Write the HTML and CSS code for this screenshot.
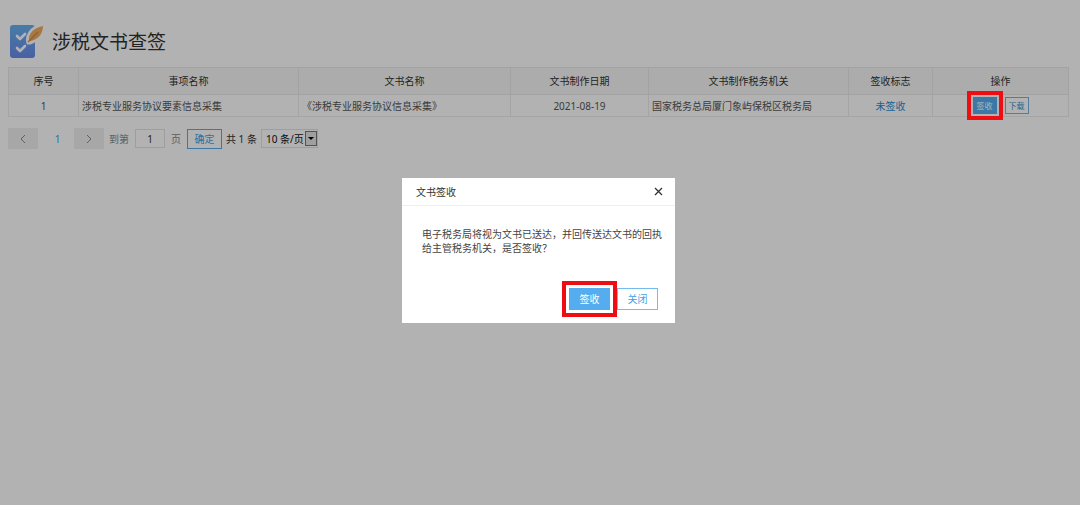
FILE: index.html
```
<!DOCTYPE html>
<html lang="zh-CN">
<head>
    <meta charset="UTF-8">
    <meta name="viewport" content="width=device-width, initial-scale=1.0">
    <title>涉税文书查签</title>
    <link rel="stylesheet" href="styles.css">
</head>
<body>
    <main class="page">
        <header class="page-title">
            <svg class="logo" viewBox="0 0 36 36" aria-hidden="true">
                <defs>
                    <linearGradient id="sheet" x1="0" y1="0" x2="0" y2="1">
                        <stop offset="0" stop-color="#66b2f0"/>
                        <stop offset="1" stop-color="#6a8aea"/>
                    </linearGradient>
                </defs>
                <rect x="2" y="2" width="25" height="33" rx="3" fill="url(#sheet)"/>
                <path d="M20 20c-2-6 2-16 15-18 1 7-4 15-13 18z" fill="#fff" stroke="#fff" stroke-width="3"/>
                <path d="M21 18c-1-7 4-13 14-15 0 7-4 13-12 15z" fill="#f0ad62"/>
                <path d="M20 19L30 9" stroke="#d08a44" stroke-width="1.2"/>
                <path d="M9 13l3 3 5-5M9 25l3 3 5-5" fill="none" stroke="#fff" stroke-width="2.6" stroke-linecap="round" stroke-linejoin="round"/>
            </svg>
            <h1>涉税文书查签</h1>
        </header>

        <table class="doc-table">
            <colgroup>
                <col class="col-no">
                <col class="col-item">
                <col class="col-name">
                <col class="col-date">
                <col class="col-office">
                <col class="col-flag">
                <col class="col-action">
            </colgroup>
            <thead>
                <tr>
                    <th>序号</th>
                    <th>事项名称</th>
                    <th>文书名称</th>
                    <th>文书制作日期</th>
                    <th>文书制作税务机关</th>
                    <th>签收标志</th>
                    <th>操作</th>
                </tr>
            </thead>
            <tbody>
                <tr>
                    <td>1</td>
                    <td class="left">涉税专业服务协议要素信息采集</td>
                    <td class="left">《涉税专业服务协议信息采集》</td>
                    <td>2021-08-19</td>
                    <td class="left">国家税务总局厦门象屿保税区税务局</td>
                    <td class="unsigned">未签收</td>
                    <td>
                        <div class="actions">
                            <span class="marked"><button type="button" class="btn-mini primary">签收</button></span>
                            <button type="button" class="btn-mini">下载</button>
                        </div>
                    </td>
                </tr>
            </tbody>
        </table>

        <nav class="pager" aria-label="分页">
            <button type="button" class="arrow" aria-label="上一页">
                <svg viewBox="0 0 8 10"><path d="M6 1L2 5l4 4"/></svg>
            </button>
            <a href="#" class="current">1</a>
            <button type="button" class="arrow" aria-label="下一页">
                <svg viewBox="0 0 8 10"><path d="M2 1l4 4-4 4"/></svg>
            </button>
            <label class="skip" for="pageNo">到第</label>
            <input type="text" id="pageNo" value="1">
            <span class="skip-end">页</span>
            <button type="button" class="confirm">确定</button>
            <span class="count">共 1 条</span>
            <span class="limit">
                <select aria-label="每页条数">
                    <option>10 条/页</option>
                    <option>20 条/页</option>
                </select>
                <svg class="limit-arrow" viewBox="0 0 12 15" aria-hidden="true">
                    <rect x=".5" y=".5" width="11" height="14" fill="#e4e4e4" stroke="#777"/>
                    <path d="M3 6h6L6 9z" fill="#000"/>
                </svg>
            </span>
        </nav>
    </main>

    <div class="shade">
        <section class="dialog" role="dialog" aria-labelledby="dialogTitle">
            <header class="dialog-head">
                <h2 id="dialogTitle">文书签收</h2>
                <button type="button" class="close" aria-label="关闭窗口">
                    <svg viewBox="0 0 9 9"><path d="M1 1l7 7M8 1L1 8"/></svg>
                </button>
            </header>
            <p class="dialog-text">电子税务局将视为文书已送达，并回传送达文书的回执给主管税务机关，是否签收？</p>
            <footer class="dialog-foot">
                <span class="marked"><button type="button" class="btn primary">签收</button></span>
                <button type="button" class="btn">关闭</button>
            </footer>
        </section>
    </div>
</body>
</html>
```
FILE: styles.css
```
* {
    box-sizing: border-box;
}

body {
    margin: 0;
    background: #fff;
    color: #444;
    font-family: "Noto Sans", "Noto Sans CJK SC", sans-serif;
    font-size: 10px;
    line-height: 14px;
}

button, input, select {
    font: inherit;
    color: inherit;
    margin: 0;
    padding: 0;
    border-radius: 0;
}

button {
    cursor: pointer;
}

.page {
    padding: 22px 11px 0 8px;
}

.page-title {
    display: flex;
    align-items: center;
    gap: 8px;
    height: 38px;
    margin-bottom: 7px;
}

.page-title h1 {
    margin: 0;
    padding-top: 2px;
    color: #333;
    font-size: 19px;
    font-weight: 400;
    line-height: 28px;
}

.logo {
    width: 36px;
    height: 36px;
}

/* table */
.doc-table {
    width: 100%;
    table-layout: fixed;
    border-collapse: collapse;
}

/* spare width is shared out in proportion */
.col-no { width: 70px; }
.col-item { width: 220px; }
.col-name { width: 212px; }
.col-date { width: 138px; }
.col-office { width: 200px; }
.col-flag { width: 84px; }
.col-action { width: 136px; }

.doc-table th,
.doc-table td {
    border: 1px solid #ececec;
    padding: 0 3px;
    text-align: center;
    white-space: nowrap;
}

.doc-table th {
    height: 27px;
    background: #f7f7f7;
    border-color: #e8e8e8;
    color: #333;
    font-weight: 400;
}

.doc-table td {
    height: 22px;
    color: #555;
}

.doc-table .left {
    text-align: left;
}

.doc-table .unsigned {
    color: #1e8fd0;
}

.actions {
    display: flex;
    justify-content: center;
    gap: 8px;
}

.btn-mini {
    display: block;
    width: 24px;
    height: 17px;
    border: 1px solid #74b4e4;
    background: #fff;
    color: #3d8fcb;
    font-size: 8px;
    line-height: 15px;
}

.primary,
.btn.primary {
    border-color: #55adf0;
    background: #55adf0;
    color: #fff;
}

/* red frame, drawn over the shade */
.marked {
    position: relative;
}

.marked::after {
    content: "";
    position: absolute;
    inset: -6px;
    z-index: 20;
    border: 4px solid #ee0d12;
    pointer-events: none;
}

/* pager */
.pager {
    display: flex;
    align-items: center;
    height: 21px;
    margin-top: 11px;
    color: #333;
}

.arrow {
    width: 30px;
    height: 21px;
    border: 0;
    background: #f0f0f0;
}

.arrow svg {
    display: block;
    width: 8px;
    height: 10px;
    margin: 0 auto;
    fill: none;
    stroke: #888;
}

.current {
    width: 36px;
    padding-left: 3px;
    color: #3f9fe6;
    text-align: center;
    text-decoration: none;
}

.skip,
.skip-end {
    color: #888;
}

.skip {
    margin: 0 6px 0 5px;
}

.skip-end {
    margin: 0 6px;
}

.pager input {
    width: 30px;
    height: 19px;
    border: 1px solid #e2e2e2;
    background: #fff;
    text-align: center;
}

.confirm {
    width: 35px;
    height: 20px;
    border: 1px solid #55adf0;
    background: #fff;
    color: #3f9fe6;
}

.count {
    margin: 0 4px;
}

.limit {
    position: relative;
    color: #111;
}

.limit select {
    display: block;
    width: 57px;
    height: 19px;
    padding-left: 4px;
    border: 1px solid #e2e2e2;
    background: #fff;
    appearance: none;
}

.limit-arrow {
    position: absolute;
    top: 2px;
    right: 1px;
    width: 12px;
    height: 15px;
    pointer-events: none;
}

/* dialog */
.shade {
    position: fixed;
    inset: 0;
    z-index: 10;
    display: flex;
    align-items: center;
    justify-content: center;
    padding: 0 3px 4px 0;
    background: rgba(0, 0, 0, 0.3);
}

.dialog {
    width: 273px;
    background: #fff;
}

.dialog-head {
    display: flex;
    align-items: center;
    justify-content: space-between;
    height: 28px;
    padding: 0 12px 0 14px;
    border-bottom: 1px solid #eee;
}

.dialog-head h2 {
    margin: 0;
    color: #333;
    font-size: 10px;
    font-weight: 400;
}

.close {
    border: 0;
    background: none;
}

.close svg {
    display: block;
    width: 9px;
    height: 9px;
    fill: none;
    stroke: #333;
    stroke-width: 1.3;
}

.dialog-text {
    margin: 0;
    padding: 21px 12px 0 20px;
}

.dialog-foot {
    display: flex;
    justify-content: flex-end;
    gap: 7px;
    padding: 33px 17px 13px;
}

.btn {
    display: block;
    width: 41px;
    height: 22px;
    border: 1px solid #74bbf2;
    background: #fff;
    color: #3f9fe6;
}

.dialog .marked::after {
    inset: -7px;
}
```
